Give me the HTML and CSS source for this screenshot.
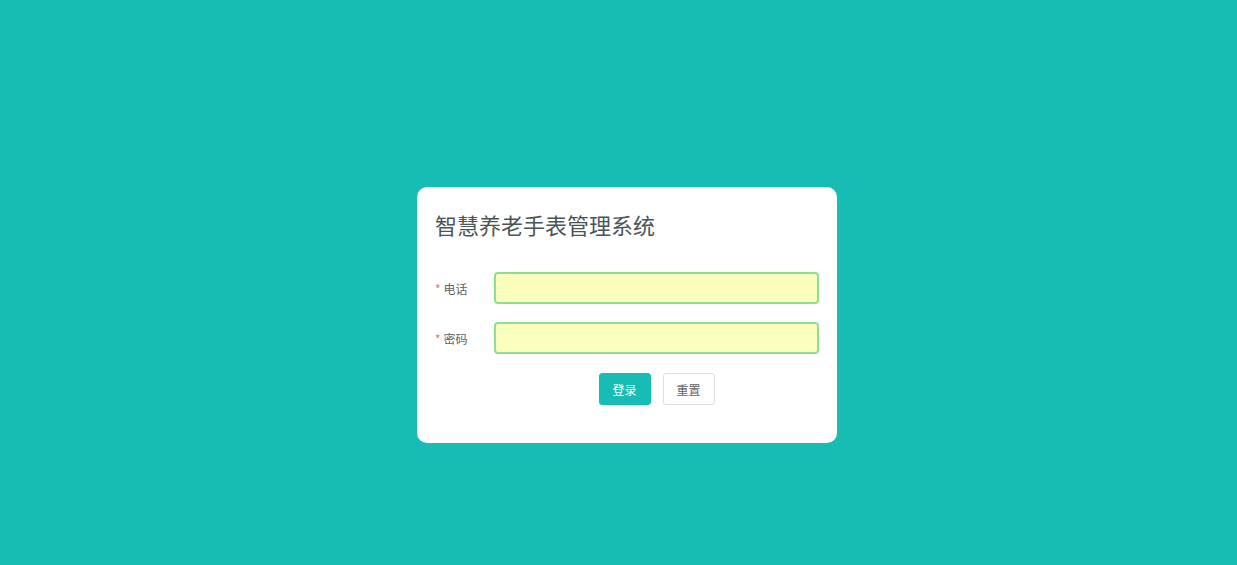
FILE: index.html
```html
<!DOCTYPE html>
<html lang="zh">
<head>
<meta charset="utf-8">
<title>智慧养老手表管理系统</title>
<link rel="stylesheet" href="styles.css">
</head>
<body>
<div class="page">
  <div class="card">
    <h1 class="title">智慧养老手表管理系统</h1>
    <form class="form">
      <div class="row">
        <label class="label"><span class="star">*</span>电话</label>
        <input class="input" type="text">
      </div>
      <div class="row">
        <label class="label"><span class="star">*</span>密码</label>
        <input class="input" type="password">
      </div>
      <div class="row actions">
        <span class="label"></span>
        <div class="btns">
          <button type="button" class="btn primary">登录</button>
          <button type="button" class="btn plain">重置</button>
        </div>
      </div>
    </form>
  </div>
</div>
</body>
</html>
```
FILE: styles.css
```css
* { box-sizing: border-box; }
html, body { margin: 0; padding: 0; height: 100%; }
body {
  background: #17bdb4;
  font-family: "Noto Sans CJK SC", "Noto Sans", sans-serif;
}
.page {
  width: 1237px;
  height: 565px;
  display: flex;
  justify-content: center;
  padding-top: 187px;
  padding-left: 17px;
}
.card {
  width: 420px;
  height: 256px;
  background: #fff;
  border-radius: 10px;
  padding: 19px 18px 0 18px;
}
.title {
  margin: 0;
  font-size: 22px;
  font-weight: 400;
  color: #4a5656;
  line-height: 36px;
}
.form {
  margin-top: 30px;
  display: flex;
  flex-direction: column;
  gap: 18px;
}
.row {
  display: flex;
  align-items: center;
  height: 32px;
}
.label {
  width: 59px;
  flex: none;
  font-size: 12px;
  color: #606266;
}
.star {
  color: #f56c6c;
  margin-right: 3px;
}
.input {
  flex: 1;
  height: 32px;
  border: 2px solid #8ee08e;
  border-radius: 4px;
  background: #faffbd;
  outline: none;
  padding: 0 10px;
}
.actions { margin-top: 1px; }
.btns {
  flex: 1;
  display: flex;
  justify-content: center;
  gap: 12px;
}
.btn {
  height: 32px;
  width: 52px;
  border-radius: 3px;
  font-size: 12px;
  font-family: "Noto Sans CJK SC", sans-serif;
  padding: 0;
  cursor: pointer;
}
.primary {
  background: #17bdb4;
  border: 1px solid #17bdb4;
  color: #fff;
}
.plain {
  background: #fff;
  border: 1px solid #dcdfe6;
  color: #606266;
}
```
